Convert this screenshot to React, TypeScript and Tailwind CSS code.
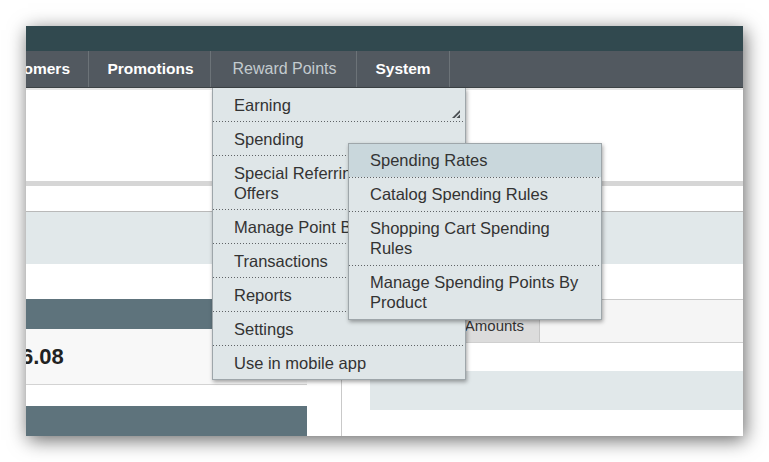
import React from "react";

const font = { fontFamily: '"Liberation Sans", Arial, sans-serif' };

const Dots = () => (
  <div className="h-px w-full bg-[repeating-linear-gradient(to_right,#5f6366_0_1px,transparent_1px_3px)]" />
);

const mainItems = [
  ["Earning"],
  ["Spending"],
  ["Special Referring", "Offers"],
  ["Manage Point Balance"],
  ["Transactions"],
  ["Reports"],
  ["Settings"],
  ["Use in mobile app"],
];

const subItems = [
  ["Spending Rates"],
  ["Catalog Spending Rules"],
  ["Shopping Cart Spending", "Rules"],
  ["Manage Spending Points By", "Product"],
];

const ResizeGrip = () => (
  <svg width="10" height="10" viewBox="0 0 10 10" className="absolute right-[4px] top-[21px]">
    <polygon points="9,1 9,9 1,9" fill="#4a4f52" />
    <line x1="9.5" y1="4" x2="4" y2="9.5" stroke="#dfe6e8" strokeWidth="1.2" />
  </svg>
);

export default function App() {
  return (
    <div className="w-[769px] h-[462px] bg-white overflow-hidden pt-[26px] pl-[26px]" style={font}>
      <div className="relative w-[717px] h-[410px] bg-white overflow-hidden shadow-[2px_4px_18px_rgba(0,0,0,0.6)]">
        {/* top bar */}
        <div className="h-[25px] bg-[#31494f]" />
        {/* nav */}
        <div className="h-[37px] bg-[#525960] border-b border-[#3d4346] flex text-[15.5px] font-bold text-white">
          <div className="w-[63px] flex justify-end items-center overflow-hidden whitespace-nowrap pr-[18px] border-r border-[#6c7378]">
            Customers
          </div>
          <div className="w-[122px] flex justify-center items-center border-r border-[#6c7378] pl-[2px]">
            Promotions
          </div>
          <div className="w-[146px] flex justify-center items-center border-r border-[#6c7378] font-normal text-[#c3cbcf] text-[16px] pl-[2px]">
            Reward Points
          </div>
          <div className="w-[93px] flex justify-center items-center border-r border-[#6c7378]">
            System
          </div>
        </div>

        {/* page content */}
        <div className="relative">
          <div className="h-[93px] border-t-2 border-[#e6e6e6]" />
          <div className="h-[5px] bg-[#d6d6d6]" />
          <div className="h-[25px]" />
          <div className="h-[53px] bg-[#e1e8ea] border-t border-[#b9b9b9]" />
          <div className="h-[35px]" />
          <div className="flex h-[137px]">
            <div className="w-[281px] flex flex-col">
              <div className="h-[30px] bg-[#5e737c]" />
              <div className="h-[56px] bg-[#f8f8f8] border-b border-[#d3d3d3] flex items-center overflow-hidden">
                <span className="-ml-[5px] text-[22px] font-bold text-[#222]">6.08</span>
              </div>
              <div className="h-[21px]" />
              <div className="flex-1 bg-[#5e737c]" />
            </div>
            <div className="ml-[34px] flex-1 border-l border-[#c9c9c9] flex flex-col">
              <div className="h-[44px] bg-[#f5f5f5] border-t border-[#c9c9c9] border-b border-b-[#cfcfcf] flex items-end">
                <div className="ml-[28px] w-[170px] h-[32px] bg-[#dcdcdc] border-r border-[#c6c6c6] flex items-center justify-end pr-[15px] text-[15px] text-[#333]">
                  Point Amounts
                </div>
              </div>
              <div className="h-[28px]" />
              <div className="ml-[28px] h-[39px] bg-[#e1e8ea]" />
            </div>
          </div>

          {/* Reward Points dropdown */}
          <div className="absolute left-[186px] top-0 w-[254px] bg-[#dfe6e8] border border-t-0 border-[#9ea6aa] shadow-[1px_2px_4px_rgba(0,0,0,0.35)] text-[16.5px] leading-[20px] text-[#333]">
            <ResizeGrip />
            {mainItems.map((lines, i) => (
              <div key={i}>
                <div className="pl-[21px] pt-[7px] pb-[6px] whitespace-nowrap overflow-hidden">
                  {lines.map((l) => (
                    <div key={l}>{l}</div>
                  ))}
                </div>
                {i < mainItems.length - 1 && <Dots />}
              </div>
            ))}
          </div>

          {/* Spending submenu */}
          <div className="absolute left-[322px] top-[55px] w-[254px] bg-[#dfe6e8] border border-[#9ea6aa] shadow-[1px_2px_4px_rgba(0,0,0,0.35)] text-[16.5px] leading-[20px] text-[#333]">
            {subItems.map((lines, i) => (
              <div key={i}>
                <div className={"pl-[21px] pt-[6px] pb-[7px] whitespace-nowrap " + (i === 0 ? "bg-[#c9d7dc]" : "")}>
                  {lines.map((l) => (
                    <div key={l}>{l}</div>
                  ))}
                </div>
                {i < subItems.length - 1 && <Dots />}
              </div>
            ))}
          </div>
        </div>
      </div>
    </div>
  );
}
